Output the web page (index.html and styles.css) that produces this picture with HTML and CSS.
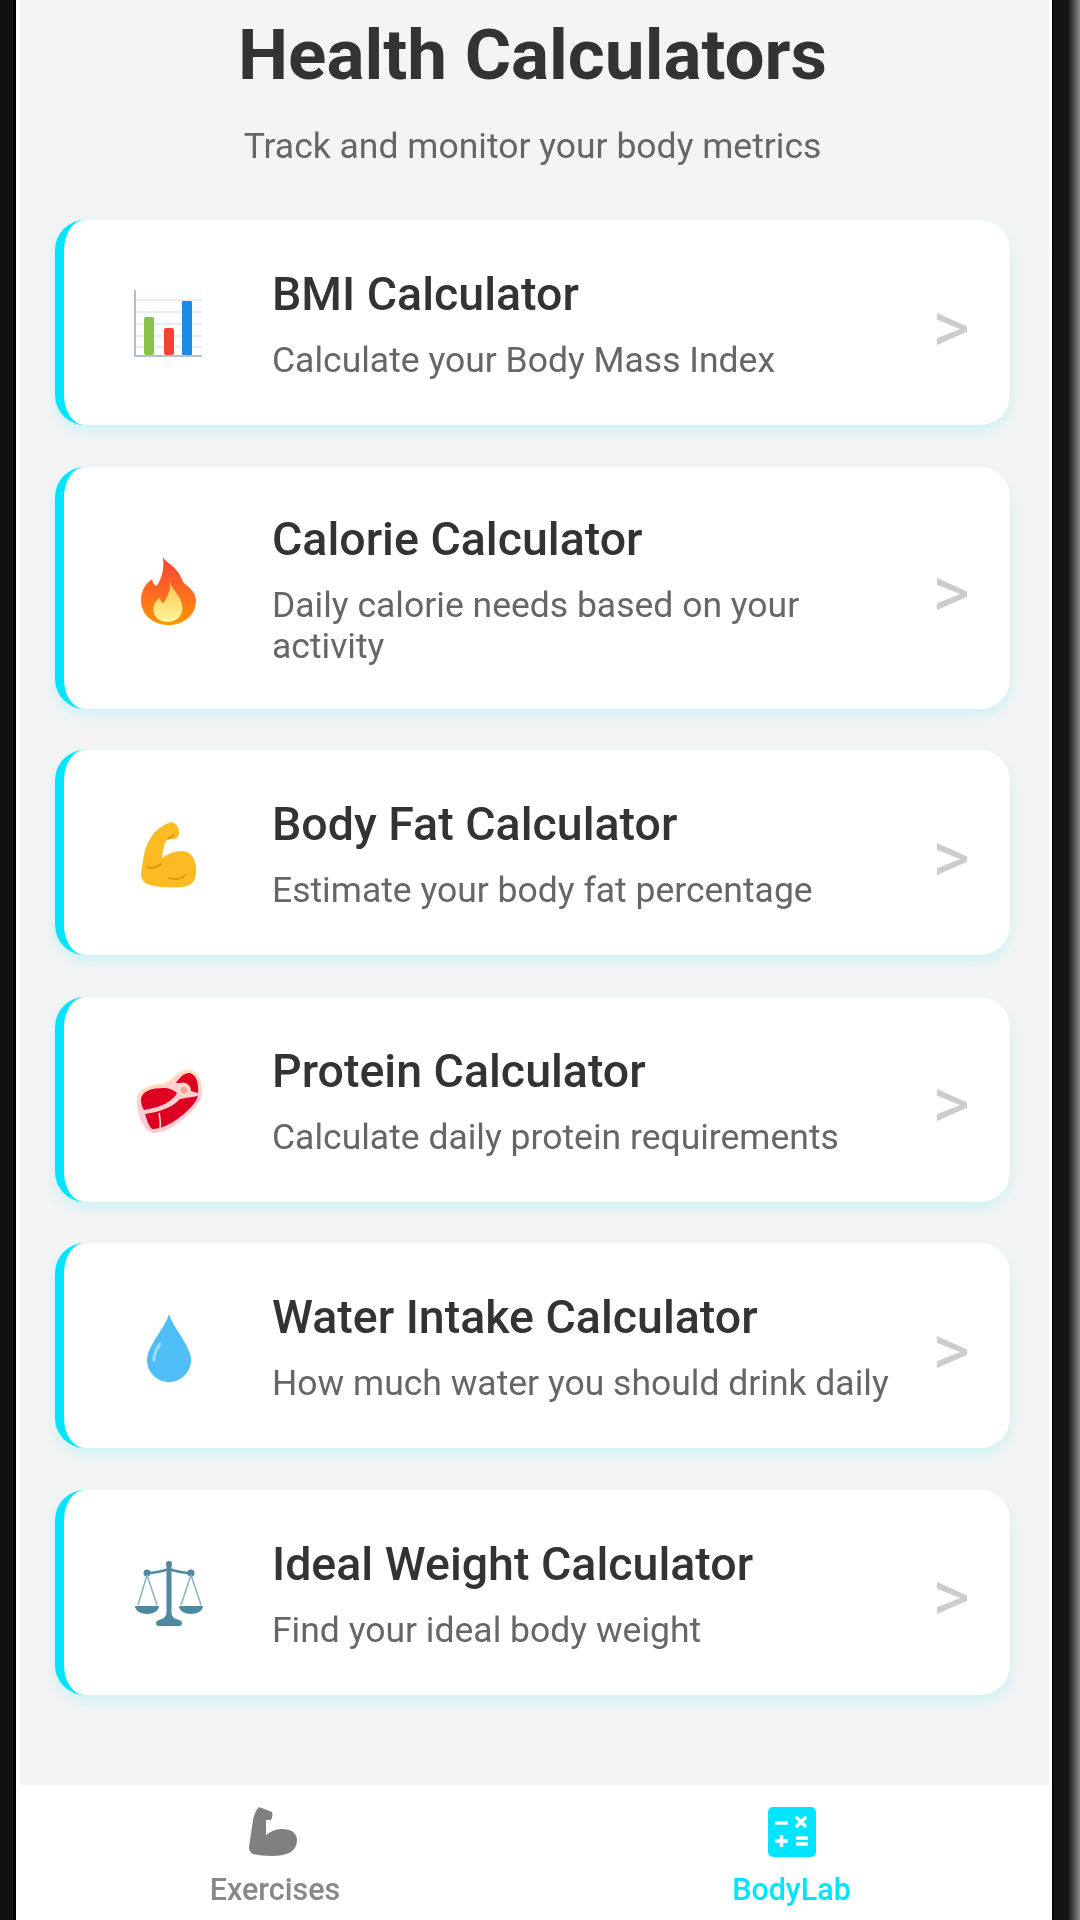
FILE: index.html
```html
<!DOCTYPE html>
<html lang="en">
<head>
	<meta charset="UTF-8">
	<title>Health Calculators</title>
	<link rel="stylesheet" href="styles.css">
</head>
<body>
	<div class="phone">
		<div class="bezelLeft"></div>
		<div class="screen">
			<div class="content">
				<h1 class="pageTitle">Health Calculators</h1>
				<p class="pageSub">Track and monitor your body metrics</p>

				<div class="calcList">
					<div class="calcCard">
						<div class="calcIcon">
							<svg class="chartIcon" width="68" height="68" viewBox="0 0 68 68">
								<rect x="0" y="0" width="68" height="66" fill="#fbfcfd"/>
								<path d="M1 10H68M1 22H68M1 34H68M1 46H68M1 57H68" stroke="#d5dde5" stroke-width="1.2"/>
								<path d="M1 0V66H68" fill="none" stroke="#b4c0cc" stroke-width="2"/>
								<rect x="10" y="27" width="10" height="38" rx="2" fill="#8bc34a"/>
								<rect x="30" y="38" width="10" height="27" rx="2" fill="#f44336"/>
								<rect x="48" y="11" width="10" height="54" rx="1" fill="#1e88e5"/>
							</svg>
						</div>
						<div class="calcText">
							<h2 class="calcName">BMI Calculator</h2>
							<p class="calcDesc">Calculate your Body Mass Index</p>
						</div>
						<span class="calcArrow">&gt;</span>
					</div>

					<div class="calcCard">
						<div class="calcIcon">
							<svg class="flameIcon" width="56" height="68" viewBox="0 0 54 68" preserveAspectRatio="none">
								<defs>
									<linearGradient id="flameOuter" x1="0" y1="0" x2="0" y2="1">
										<stop offset="0" stop-color="#f44336"/>
										<stop offset="0.55" stop-color="#ff6d1f"/>
										<stop offset="1" stop-color="#ff9800"/>
									</linearGradient>
									<linearGradient id="flameInner" x1="0" y1="0" x2="0" y2="1">
										<stop offset="0" stop-color="#ffc64d"/>
										<stop offset="1" stop-color="#fff59d"/>
									</linearGradient>
								</defs>
								<path d="M21 0C24 6 36 10 40 24C42 27 44 28 46 30C50 34 53 38 53 44C53 58 41 68 27 68C12 68 0 58 0 43C0 33 5 26 11 22C11 26 13 28 15 29C20 22 23 10 21 0Z" fill="url(#flameOuter)"/>
								<path d="M28 25C30 33 40 40 40 51C40 60 33 65 26 65C17 65 12 59 12 52C12 47 15 43 18 41C19 44 20 46 22 46C25 40 29 33 28 25Z" fill="url(#flameInner)"/>
							</svg>
						</div>
						<div class="calcText">
							<h2 class="calcName">Calorie Calculator</h2>
							<p class="calcDesc">Daily calorie needs based on your activity</p>
						</div>
						<span class="calcArrow">&gt;</span>
					</div>

					<div class="calcCard">
						<div class="calcIcon">
							<svg width="56" height="66" viewBox="0 0 56 66">
								<path d="M0 52C2 38 3 26 9 17C13 9 22 2 31 0C36 2 39 7 38 12C37 17 32 18 27 17C24 19 22 26 21 36C28 31 38 27 46 30C53 33 56 42 55 52C54 60 49 65 40 65C28 66 14 65 6 62C2 60 0 56 0 52Z" fill="#fcba23"/>
								<path d="M27 17C29 15 31 14 33 13M6 45C11 47 16 45 20 42M28 56C34 58 40 57 44 53" fill="none" stroke="#e08e0b" stroke-width="1.6" stroke-linecap="round"/>
							</svg>
						</div>
						<div class="calcText">
							<h2 class="calcName">Body Fat Calculator</h2>
							<p class="calcDesc">Estimate your body fat percentage</p>
						</div>
						<span class="calcArrow">&gt;</span>
					</div>

					<div class="calcCard">
						<div class="calcIcon">
							<svg width="67" height="65" viewBox="0 0 67 65">
								<path d="M1 32C1 20 12 16 26 15C34 14 38 4 50 1C60 0 67 10 66 22C66 30 62 36 56 42C46 52 32 64 18 64C8 64 1 46 1 32Z" fill="#ffcdd2"/>
								<path d="M2 31C3 20 13 17 26 16C34 15 39 5 50 2C59 1 65 10 65 21" fill="none" stroke="#ffe0b2" stroke-width="2"/>
								<path d="M5 30C6 22 16 19 28 19C33 19 38 21 41 24C37 32 26 38 8 41C6 38 5 34 5 30Z" fill="#dd0020"/>
								<path d="M9 45C24 43 37 38 44 30L62 27C60 34 52 42 44 48C34 56 24 60 17 60C14 60 11 52 9 45Z" fill="#dd0020"/>
								<path d="M40 14C44 8 48 4 54 4C60 6 63 14 62 24L55 22C55 16 50 12 44 14Z" fill="#dd0020"/>
								<path d="M23 44C24 49 25 54 24 59" fill="none" stroke="#ffd9b8" stroke-width="1.6"/>
								<circle cx="48" cy="21" r="6" fill="#ffe0b2"/>
								<circle cx="48" cy="21" r="3.5" fill="#f8a0b0"/>
							</svg>
						</div>
						<div class="calcText">
							<h2 class="calcName">Protein Calculator</h2>
							<p class="calcDesc">Calculate daily protein requirements</p>
						</div>
						<span class="calcArrow">&gt;</span>
					</div>

					<div class="calcCard">
						<div class="calcIcon">
							<svg width="44" height="68" viewBox="0 0 44 68">
								<path d="M22 0C26 14 44 32 44 46C44 58 34 68 22 68C10 68 0 58 0 46C0 32 18 14 22 0Z" fill="#4fbdf6"/>
								<path d="M7 46C7 40 10 34 13 30" fill="none" stroke="#9adcfb" stroke-width="3" stroke-linecap="round"/>
							</svg>
						</div>
						<div class="calcText">
							<h2 class="calcName">Water Intake Calculator</h2>
							<p class="calcDesc">How much water you should drink daily</p>
						</div>
						<span class="calcArrow">&gt;</span>
					</div>

					<div class="calcCard">
						<div class="calcIcon">
							<svg width="68" height="66" viewBox="0 0 68 66">
								<path d="M12 12C20 12 28 10 34 8C40 10 48 12 56 12" fill="none" stroke="#4f88a3" stroke-width="2.5"/>
								<path d="M31.5 4H36.5V52C37 56 40 58 44 59C48 60 48 65 44 65H24C20 65 20 60 24 59C28 58 31 56 31.5 52Z" fill="#4f88a3"/>
								<circle cx="34" cy="3" r="3" fill="#4f88a3"/>
								<circle cx="12" cy="12" r="3.5" fill="#4f88a3"/>
								<circle cx="56" cy="12" r="3.5" fill="#4f88a3"/>
								<path d="M12 14L3 44M12 14L22 44M56 14L46 44M56 14L66 44" fill="none" stroke="#8fb5c7" stroke-width="1.6"/>
								<path d="M0 45H24C24 50 18 53 12 53C6 53 0 50 0 45Z" fill="#4f88a3"/>
								<path d="M44 45H68C68 50 62 53 56 53C50 53 44 50 44 45Z" fill="#4f88a3"/>
							</svg>
						</div>
						<div class="calcText">
							<h2 class="calcName">Ideal Weight Calculator</h2>
							<p class="calcDesc">Find your ideal body weight</p>
						</div>
						<span class="calcArrow">&gt;</span>
					</div>
				</div>
			</div>

			<div class="tabBar">
				<div class="tabItem">
					<svg class="armIcon" width="48" height="50" viewBox="0 0 48 50">
						<path d="M10 0L23 5C24 8 23 11 22 13H17V28C22 24 27 22 32 22C37 22 42 23 44 25C47 28 48 30 48 33C48 38 46 42 42 45C36 48 29 49 23 49C16 49 9 48 4 47C1 45 0 43 0 40L4 13C5 8 7 3 10 0Z" fill="#808080"/>
					</svg>
					<span class="tabLabel">Exercises</span>
				</div>
				<div class="tabItem tabActive">
					<svg class="calcTabIcon" width="48" height="50" viewBox="0 0 48 50">
						<rect width="48" height="50" rx="5" fill="#00e5ff"/>
						<path d="M7 16H20M28 10L38 20M38 10L28 20M7 34H20M13.5 28V40M28 31H40M28 37H40" fill="none" stroke="#fff" stroke-width="3.4"/>
					</svg>
					<span class="tabLabel">BodyLab</span>
				</div>
			</div>
		</div>
		<div class="bezelRight"></div>
	</div>
</body>
</html>
```

FILE: styles.css
```css
* {
	margin: 0;
	padding: 0;
	box-sizing: border-box;
	font-family: Roboto, "Liberation Sans", sans-serif;
}

body {
	width: 1080px;
	height: 1920px;
	overflow: hidden;
	background-color: #111;
}

.phone {
	display: flex;
	width: 1080px;
	height: 1920px;
	filter: blur(0.7px);
}

.bezelLeft {
	width: 16px;
	background: linear-gradient(to right, #111 13px, #000 13px);
}

.bezelRight {
	width: 28px;
	background: linear-gradient(to right, #000 0, #141414 3px, #141414 16px, #8a8a8a 100%);
}

.screen {
	flex: 1;
	display: flex;
	flex-direction: column;
	background-color: #fff;
}

.content {
	flex: 1;
	margin: 0 3px 0 4px;
	padding: 15px 39px 0 35px;
	background-color: #f4f4f4;
}

.pageTitle {
	font-size: 71px;
	line-height: 80px;
	font-weight: 700;
	color: #333;
	text-align: center;
}

.pageSub {
	margin-top: 31px;
	font-size: 35.5px;
	line-height: 40px;
	color: #666;
	text-align: center;
}

.calcList {
	display: flex;
	flex-direction: column;
	gap: 41.5px;
	margin-top: 54px;
}

.calcCard {
	display: flex;
	align-items: center;
	min-height: 205px;
	padding: 46px 40px 42px 60px;
	background-color: #fff;
	border-left: 9px solid #00e5ff;
	border-radius: 30px;
	box-shadow: 0 6px 14px rgba(0, 229, 255, 0.16);
}

.calcIcon {
	display: flex;
	justify-content: center;
	align-items: center;
	width: 90px;
	margin-right: 58px;
	flex-shrink: 0;
}

.chartIcon {
	margin: 0 3px 2px 0;
}

.flameIcon {
	margin-top: 2px;
}

.calcText {
	flex: 1;
	padding-right: 28px;
}

.calcName {
	font-size: 46.5px;
	line-height: 52px;
	font-weight: 500;
	color: #333;
}

.calcDesc {
	margin-top: 20px;
	font-size: 35.5px;
	line-height: 41px;
	color: #666;
}

.calcArrow {
	margin-top: 6px;
	font-size: 72px;
	line-height: 72px;
	color: #ccc;
}

.tabBar {
	display: flex;
	height: 135px;
	flex-shrink: 0;
	background-color: #fff;
}

.tabItem {
	flex: 1;
	display: flex;
	flex-direction: column;
	align-items: center;
	padding-top: 22px;
}

.armIcon {
	margin-right: 4px;
}

.calcTabIcon {
	margin-right: 3px;
}

.tabLabel {
	margin-top: 15px;
	font-size: 30.5px;
	line-height: 36px;
	font-weight: 500;
	color: #888;
}

.tabActive .tabLabel {
	margin-right: 3px;
	color: #00e5ff;
}
```
